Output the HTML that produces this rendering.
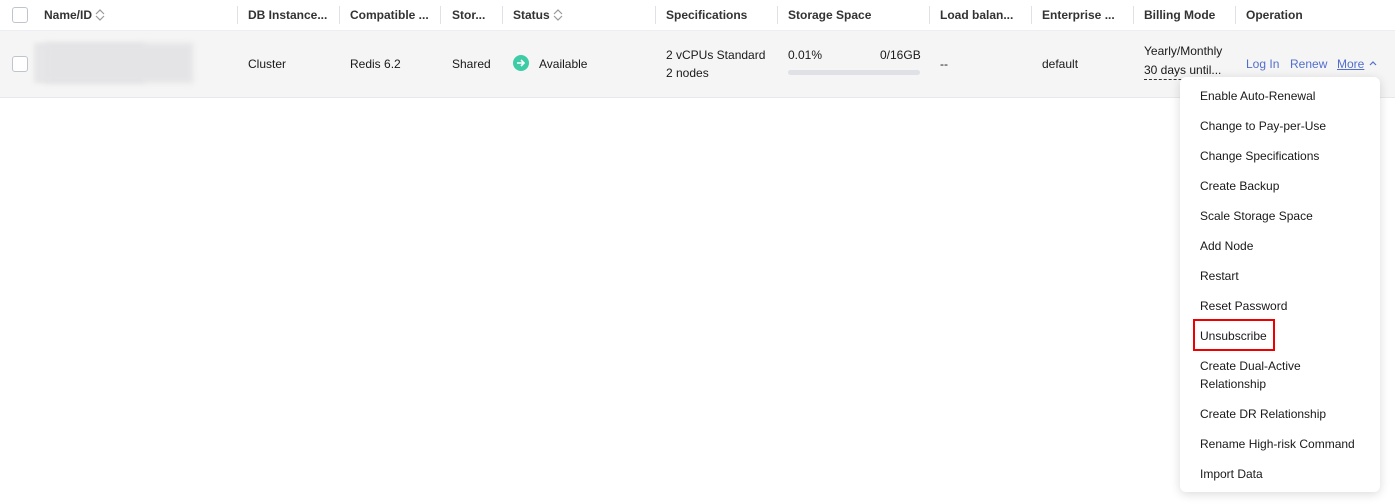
<!DOCTYPE html>
<html><head><meta charset="utf-8"><style>
*{margin:0;padding:0;box-sizing:border-box}
body{width:1395px;height:504px;background:#fff;font-family:"Liberation Sans",Arial,sans-serif;font-size:12px;color:#191919;position:relative;overflow:hidden}
.a{position:absolute;white-space:nowrap}
.h{font-weight:bold;color:#333;top:8px}
.sep{position:absolute;top:6px;width:1px;height:18px;background:#dfe1e6}
.cb{position:absolute;width:16px;height:16px;border:1px solid #c0c4cc;border-radius:3px;background:#fff}
.mi{position:absolute;left:1200px;font-size:12px;color:#191919}
</style></head><body>
<div class="a" style="left:0;top:30px;width:1395px;height:68px;background:#f5f5f5;border-top:1px solid #eceef2;border-bottom:1px solid #e6e8eb"></div>
<div class="cb" style="left:12px;top:7px"></div>
<div class="cb" style="left:12px;top:56px"></div>
<div class="a" style="left:34px;top:43px;width:110px;height:40px;background:#e6e6e8;filter:blur(2px)"></div>
<div class="a" style="left:45px;top:43px;width:148px;height:40px;background:#e4e4e6;filter:blur(3px)"></div>
<div class="a h" style="left:44px">Name/ID <svg width="10" height="12" viewBox="0 0 10 12" style="vertical-align:-2px"><path d="M1 5L5 1 9 5M1 7L5 11 9 7" fill="none" stroke="#999" stroke-width="1.2"/></svg></div>
<div class="sep" style="left:237px"></div>
<div class="a h" style="left:248px">DB Instance...</div>
<div class="sep" style="left:339px"></div>
<div class="a h" style="left:350px">Compatible ...</div>
<div class="sep" style="left:440px"></div>
<div class="a h" style="left:452px">Stor...</div>
<div class="sep" style="left:502px"></div>
<div class="a h" style="left:513px">Status <svg width="10" height="12" viewBox="0 0 10 12" style="vertical-align:-2px"><path d="M1 5L5 1 9 5M1 7L5 11 9 7" fill="none" stroke="#999" stroke-width="1.2"/></svg></div>
<div class="sep" style="left:655px"></div>
<div class="a h" style="left:666px">Specifications</div>
<div class="sep" style="left:777px"></div>
<div class="a h" style="left:788px">Storage Space</div>
<div class="sep" style="left:929px"></div>
<div class="a h" style="left:940px">Load balan...</div>
<div class="sep" style="left:1031px"></div>
<div class="a h" style="left:1042px">Enterprise ...</div>
<div class="sep" style="left:1133px"></div>
<div class="a h" style="left:1144px">Billing Mode</div>
<div class="sep" style="left:1235px"></div>
<div class="a h" style="left:1246px">Operation</div>

<div class="a" style="left:248px;top:57px">Cluster</div>
<div class="a" style="left:350px;top:57px">Redis 6.2</div>
<div class="a" style="left:452px;top:57px">Shared</div>
<svg class="a" style="left:513px;top:55px" width="16" height="16" viewBox="0 0 16 16"><circle cx="8" cy="8" r="8" fill="#3dcca6"/><path d="M4 8h7M8 5l3 3-3 3" fill="none" stroke="#fff" stroke-width="1.6"/></svg>
<div class="a" style="left:539px;top:57px">Available</div>
<div class="a" style="left:666px;top:48px">2 vCPUs Standard</div>
<div class="a" style="left:666px;top:66px">2 nodes</div>
<div class="a" style="left:788px;top:48px">0.01%</div>
<div class="a" style="left:880px;top:48px">0/16GB</div>
<div class="a" style="left:788px;top:70px;width:132px;height:5px;border-radius:3px;background:#dfe1e6"></div>
<div class="a" style="left:940px;top:57px">--</div>
<div class="a" style="left:1042px;top:57px">default</div>
<div class="a" style="left:1144px;top:44px">Yearly/Monthly</div>
<div class="a" style="left:1144px;top:63px;border-bottom:1px dashed #333;padding-bottom:2px">30 days until...</div>
<div class="a" style="left:1246px;top:57px;color:#526ecc">Log In</div>
<div class="a" style="left:1290px;top:57px;color:#526ecc">Renew</div>
<div class="a" style="left:1337px;top:57px;color:#526ecc;text-decoration:underline">More</div>
<svg class="a" style="left:1369px;top:60px" width="8" height="6" viewBox="0 0 8 6"><path d="M1 5L4 2 7 5" fill="none" stroke="#526ecc" stroke-width="1.2"/></svg>

<div class="a" style="left:1180px;top:77px;width:200px;height:415px;background:#fff;border-radius:6px;box-shadow:0 2px 10px rgba(0,0,0,.15)"></div>
<div class="mi" style="top:89px">Enable Auto-Renewal</div>
<div class="mi" style="top:119px">Change to Pay-per-Use</div>
<div class="mi" style="top:149px">Change Specifications</div>
<div class="mi" style="top:179px">Create Backup</div>
<div class="mi" style="top:209px">Scale Storage Space</div>
<div class="mi" style="top:239px">Add Node</div>
<div class="mi" style="top:269px">Restart</div>
<div class="mi" style="top:299px">Reset Password</div>
<div class="mi" style="top:329px">Unsubscribe</div>
<div class="a" style="left:1193px;top:319px;width:82px;height:32px;border:2px solid #e00"></div>
<div class="mi" style="top:359px">Create Dual-Active</div>
<div class="mi" style="top:377px">Relationship</div>
<div class="mi" style="top:407px">Create DR Relationship</div>
<div class="mi" style="top:437px">Rename High-risk Command</div>
<div class="mi" style="top:467px">Import Data</div>
</body></html>
